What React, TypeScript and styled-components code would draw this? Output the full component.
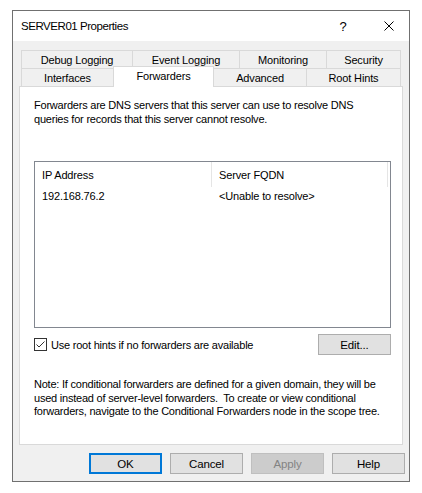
import React from "react";
import styled, { createGlobalStyle } from "styled-components";

const Global = createGlobalStyle`
  html, body { margin: 0; padding: 0; background: #ffffff; }
  body { font-family: "Liberation Sans", Arial, sans-serif; font-size: 11px; color: #000; }
`;

const Window = styled.div`
  margin: 10px 0 0 12px;
  width: 398px;
  height: 472px;
  box-sizing: border-box;
  border: 1px solid #707070;
  background: #f0f0f0;
  display: flex;
  flex-direction: column;
`;

const TitleBar = styled.div`
  height: 30px;
  background: #ffffff;
  display: flex;
  align-items: center;
  padding-left: 8px;
`;

const TitleText = styled.div`
  flex: 1;
  font-size: 11.5px;
  letter-spacing: -0.45px;
  color: #000;
`;

const CaptionButton = styled.div<{ $w: number }>`
  width: ${(p) => p.$w}px;
  height: 30px;
  display: flex;
  align-items: center;
  justify-content: center;
  font-size: 13px;
`;

const Body = styled.div`
  flex: 1;
  display: flex;
  flex-direction: column;
  padding: 9px 6px 0 6px;
`;

const TabRow = styled.div`
  display: flex;
  margin: 0 2px;
  height: 18px;
`;

const Tab = styled.div<{ $w: number; $active?: boolean }>`
  width: ${(p) => p.$w + 1}px;
  margin-right: -1px;
  box-sizing: border-box;
  border: 1px solid #d9d9d9;
  border-bottom: none;
  background: ${(p) => (p.$active ? "#ffffff" : "#f0f0f0")};
  display: flex;
  align-items: center;
  justify-content: center;
  height: ${(p) => (p.$active ? 21 : 18)}px;
  margin-top: ${(p) => (p.$active ? -2 : 0)}px;
  padding-bottom: ${(p) => (p.$active ? 3 : 0)}px;
  position: relative;
  z-index: ${(p) => (p.$active ? 2 : 1)};
  font-size: 11px;
  letter-spacing: -0.15px;
  white-space: nowrap;
`;

const Panel = styled.div`
  height: 359px;
  box-sizing: border-box;
  border: 1px solid #d9d9d9;
  background: #ffffff;
  padding: 12px 11px 0 14px;
  display: flex;
  flex-direction: column;
`;

const Paragraph = styled.div`
  font-size: 11px;
  line-height: 13.5px;
  white-space: nowrap;
  letter-spacing: -0.22px;
`;

const ListBox = styled.div`
  margin-top: 35px;
  height: 167px;
  box-sizing: border-box;
  border: 1px solid #828790;
  background: #fff;
  font-size: 11px;
  letter-spacing: -0.15px;
`;

const ListHeader = styled.div`
  display: flex;
  height: 25px;
`;

const HeaderCell = styled.div<{ $w: number }>`
  width: ${(p) => p.$w}px;
  box-sizing: border-box;
  border-right: 1px solid #e5e5e5;
  padding-left: 7px;
  display: flex;
  align-items: center;
`;

const ListRow = styled.div`
  display: flex;
  height: 17px;
  align-items: center;
`;

const Cell = styled.div<{ $w: number }>`
  width: ${(p) => p.$w}px;
  padding-left: 7px;
  box-sizing: border-box;
  white-space: nowrap;
`;

const OptionRow = styled.div`
  margin-top: 6px;
  display: flex;
  align-items: center;
  height: 21px;
`;

const CheckLabel = styled.label`
  flex: 1;
  display: flex;
  align-items: center;
  gap: 4px;
  font-size: 11px;
  letter-spacing: -0.22px;
`;

const CheckBox = styled.span`
  width: 13px;
  height: 13px;
  box-sizing: border-box;
  border: 1px solid #333333;
  background: #fff;
  display: flex;
  align-items: center;
  justify-content: center;
`;

const Button = styled.div<{ $default?: boolean; $disabled?: boolean }>`
  width: 73px;
  height: 21px;
  box-sizing: border-box;
  border: ${(p) => (p.$default ? "2px solid #0078d7" : p.$disabled ? "1px solid #bfbfbf" : "1px solid #adadad")};
  background: ${(p) => (p.$disabled ? "#cccccc" : "#e1e1e1")};
  color: ${(p) => (p.$disabled ? "#838383" : "#000")};
  display: flex;
  align-items: center;
  justify-content: center;
  font-size: 11.5px;
  letter-spacing: -0.15px;
`;

const Note = styled(Paragraph)`
  margin-top: 23px;
`;

const ButtonBar = styled.div`
  display: flex;
  justify-content: flex-end;
  gap: 8px;
  margin-top: 8px;
  margin-right: -2px;
`;

const rows1 = [
  { label: "Debug Logging", w: 111 },
  { label: "Event Logging", w: 107 },
  { label: "Monitoring", w: 87 },
  { label: "Security", w: 74 },
];
const rows2 = [
  { label: "Interfaces", w: 92 },
  { label: "Forwarders", w: 100, active: true },
  { label: "Advanced", w: 93 },
  { label: "Root Hints", w: 94 },
];

export default function App() {
  return (
    <>
      <Global />
      <Window>
        <TitleBar>
          <TitleText>SERVER01 Properties</TitleText>
          <CaptionButton $w={52}>?</CaptionButton>
          <CaptionButton $w={40}>
            <svg width="10" height="10" viewBox="0 0 10 10">
              <path d="M0.5 0.5 L9.5 9.5 M9.5 0.5 L0.5 9.5" stroke="#000" strokeWidth="1" />
            </svg>
          </CaptionButton>
        </TitleBar>
        <Body>
          <TabRow>
            {rows1.map((t) => (
              <Tab key={t.label} $w={t.w}>{t.label}</Tab>
            ))}
          </TabRow>
          <TabRow>
            {rows2.map((t) => (
              <Tab key={t.label} $w={t.w} $active={t.active}>{t.label}</Tab>
            ))}
          </TabRow>
          <Panel>
            <Paragraph>
              Forwarders are DNS servers that this server can use to resolve DNS
              <br />
              queries for records that this server cannot resolve.
            </Paragraph>
            <ListBox>
              <ListHeader>
                <HeaderCell $w={177}>IP Address</HeaderCell>
                <HeaderCell $w={176}>Server FQDN</HeaderCell>
              </ListHeader>
              <ListRow>
                <Cell $w={177}>192.168.76.2</Cell>
                <Cell $w={176}>&lt;Unable to resolve&gt;</Cell>
              </ListRow>
            </ListBox>
            <OptionRow>
              <CheckLabel>
                <CheckBox>
                  <svg width="11" height="11" viewBox="0 0 11 11">
                    <path d="M1.5 5.5 L4 8 L9.5 2.5" stroke="#333" strokeWidth="1" fill="none" />
                  </svg>
                </CheckBox>
                Use root hints if no forwarders are available
              </CheckLabel>
              <Button>Edit...</Button>
            </OptionRow>
            <Note>
              Note: If conditional forwarders are defined for a given domain, they will be
              <br />
              used instead of server-level forwarders.&nbsp; To create or view conditional
              <br />
              forwarders, navigate to the Conditional Forwarders node in the scope tree.
            </Note>
          </Panel>
          <ButtonBar>
            <Button $default>OK</Button>
            <Button>Cancel</Button>
            <Button $disabled>Apply</Button>
            <Button>Help</Button>
          </ButtonBar>
        </Body>
      </Window>
    </>
  );
}
